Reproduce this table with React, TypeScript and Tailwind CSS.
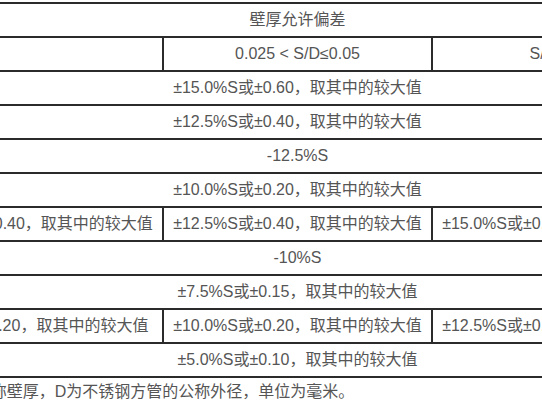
import React from 'react';

const font = { fontFamily: '"Liberation Sans", "Noto Sans CJK SC", sans-serif' };

const cell = 'border-2 border-[#2b2b2b] p-0 h-[34px] text-center align-middle whitespace-nowrap';

const fullRows = {
    r3: '±15.0%S或±0.60，取其中的较大值',
    r4: '±12.5%S或±0.40，取其中的较大值',
    r5: '-12.5%S',
    r6: '±10.0%S或±0.20，取其中的较大值',
    r8: '-10%S',
    r9: '±7.5%S或±0.15，取其中的较大值',
    r11: '±5.0%S或±0.10，取其中的较大值',
};

const App: React.FC = () => {
    return (
        <div className="w-[542px] h-[407px] overflow-hidden bg-white text-[16px] text-[#555]" style={font}>
            <div className="ml-[-107px] w-[807px] pt-[2px]">
                <table className="w-[807px] table-fixed border-collapse">
                    <colgroup>
                        <col className="w-[269px]" />
                        <col className="w-[269px]" />
                        <col className="w-[269px]" />
                    </colgroup>
                    <tbody>
                        <tr>
                            <td colSpan={3} className={cell}>壁厚允许偏差</td>
                        </tr>
                        <tr>
                            <td className={cell}></td>
                            <td className={cell}>0.025 &lt; S/D≤0.05</td>
                            <td className={cell}>S/D＞0.05</td>
                        </tr>
                        <tr><td colSpan={3} className={cell}>{fullRows.r3}</td></tr>
                        <tr><td colSpan={3} className={cell}>{fullRows.r4}</td></tr>
                        <tr><td colSpan={3} className={cell}>{fullRows.r5}</td></tr>
                        <tr><td colSpan={3} className={cell}>{fullRows.r6}</td></tr>
                        <tr>
                            <td className={cell}>±10.0%S或±0.40，取其中的较大值</td>
                            <td className={cell}>±12.5%S或±0.40，取其中的较大值</td>
                            <td className={cell}>±15.0%S或±0.40，取其中的较大值</td>
                        </tr>
                        <tr><td colSpan={3} className={cell}>{fullRows.r8}</td></tr>
                        <tr><td colSpan={3} className={cell}>{fullRows.r9}</td></tr>
                        <tr>
                            <td className={cell}>±7.5%S或±0.20，取其中的较大值</td>
                            <td className={cell}>±10.0%S或±0.20，取其中的较大值</td>
                            <td className={cell}>±12.5%S或±0.20，取其中的较大值</td>
                        </tr>
                        <tr><td colSpan={3} className={cell}>{fullRows.r11}</td></tr>
                    </tbody>
                </table>
                <p className="ml-[-73px] leading-[28px] whitespace-nowrap">
                    注：S为不锈钢方管的公称壁厚，D为不锈钢方管的公称外径，单位为毫米。
                </p>
            </div>
        </div>
    );
};

export default App;
